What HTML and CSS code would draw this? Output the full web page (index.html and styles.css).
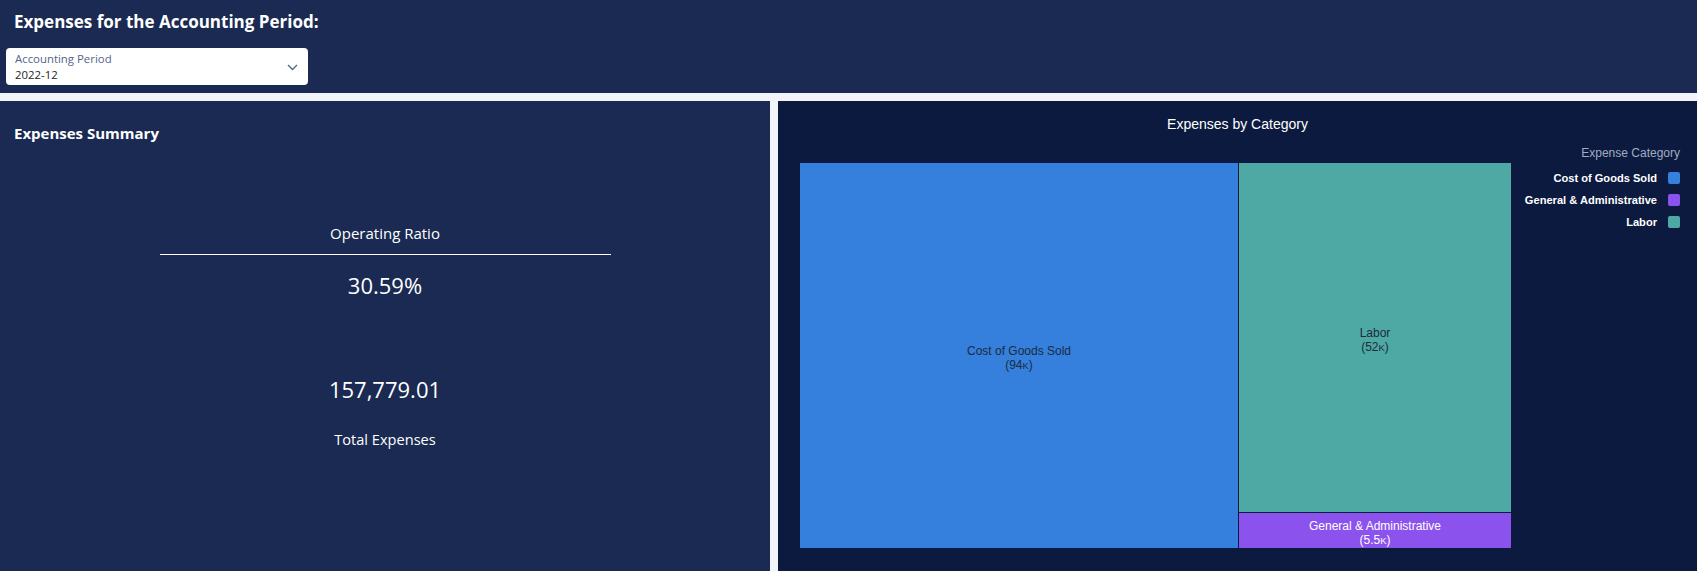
FILE: index.html
```html
<!DOCTYPE html>
<html lang="en">
<head>
<meta charset="utf-8">
<title>Expenses</title>
<link rel="stylesheet" href="styles.css">
</head>
<body>
<header class="header">
  <h1 class="title">Expenses for the Accounting Period:</h1>
  <div class="dropdown">
    <div class="dd-text">
      <div class="dd-label">Accounting Period</div>
      <div class="dd-value">2022-12</div>
    </div>
    <svg class="chev" width="11" height="7" viewBox="0 0 11 7"><path d="M1 1 L5.5 5.5 L10 1" fill="none" stroke="#56688c" stroke-width="1.4"/></svg>
  </div>
</header>
<main class="panels">
  <section class="panel left">
    <h2 class="panel-title">Expenses Summary</h2>
    <div class="kpis">
      <div class="kpi-label">Operating Ratio</div>
      <div class="rule"></div>
      <div class="kpi-value">30.59%</div>
      <div class="kpi-value total">157,779.01</div>
      <div class="kpi-label total-label">Total Expenses</div>
    </div>
  </section>
  <section class="panel right">
    <div class="chart-title">Expenses by Category</div>
    <div class="chart-body">
      <div class="treemap">
        <div class="tile cogs"><span>Cost of Goods Sold</span><span>(94<span class="sc">K</span>)</span></div>
        <div class="tm-col">
          <div class="tile labor"><span>Labor</span><span>(52<span class="sc">K</span>)</span></div>
          <div class="tile ga"><span>General &amp; Administrative</span><span>(5.5<span class="sc">K</span>)</span></div>
        </div>
      </div>
      <div class="legend">
        <div class="legend-title">Expense Category</div>
        <div class="legend-item"><span>Cost of Goods Sold</span><i class="sw sw-cogs"></i></div>
        <div class="legend-item"><span>General &amp; Administrative</span><i class="sw sw-ga"></i></div>
        <div class="legend-item"><span>Labor</span><i class="sw sw-labor"></i></div>
      </div>
    </div>
  </section>
</main>
</body>
</html>
```

FILE: styles.css
```css
* { box-sizing: border-box; }
html, body { margin: 0; padding: 0; }
body {
  width: 1697px;
  height: 571px;
  overflow: hidden;
  background: #f2f4fa;
  font-family: "Open Sans", "Liberation Sans", sans-serif;
}
.header {
  height: 93px;
  background: #1a2a52;
  padding: 10px 0 0 6px;
}
.title {
  margin: 0 0 0 8px;
  font-size: 17px;
  line-height: 24px;
  font-weight: 700;
  color: #ffffff;
}
.dropdown {
  margin-top: 14px;
  width: 302px;
  height: 37px;
  background: #ffffff;
  border-radius: 4px;
  display: flex;
  align-items: center;
  justify-content: space-between;
  padding: 0 10px 0 9px;
}
.dd-text { display: flex; flex-direction: column; gap: 1px; }
.dd-label { font-size: 11.4px; line-height: 15px; color: #52648a; }
.dd-value { font-size: 11.4px; line-height: 15px; color: #252525; }
.chev { margin-top: 1px; }

.panels {
  margin-top: 8px;
  height: 470px;
  display: flex;
  gap: 8px;
}
.panel { height: 470px; }
.left {
  width: 770px;
  background: #1a2a52;
  padding: 22px 0 0 14px;
}
.panel-title {
  margin: 0;
  font-size: 15px;
  line-height: 20px;
  font-weight: 700;
  color: #ffffff;
}
.kpis {
  margin: 80px 0 0 -14px;
  width: 770px;
  display: flex;
  flex-direction: column;
  align-items: center;
  color: #ffffff;
}
.kpi-label { font-size: 15px; line-height: 20px; }
.rule { width: 451px; height: 1px; background: #ffffff; margin-top: 11px; }
.kpi-value { font-size: 22px; line-height: 30px; margin-top: 15px; }
.kpi-value.total { margin-top: 74px; }
.total-label { margin-top: 25px; font-size: 14.6px; }

.right {
  flex: 1;
  background: #0b1a3e;
  padding-top: 14px;
  font-family: "Liberation Sans", Arial, sans-serif;
}
.chart-title {
  text-align: center;
  font-size: 14px;
  line-height: 18px;
  color: #ffffff;
}
.chart-body {
  display: flex;
  padding-left: 22px;
}
.treemap {
  margin-top: 30px;
  width: 711px;
  height: 385px;
  display: flex;
  gap: 1px;
  background: #0b1a3e;
}
.tm-col {
  width: 272px;
  display: flex;
  flex-direction: column;
  gap: 1px;
}
.tile {
  display: flex;
  flex-direction: column;
  align-items: center;
  justify-content: center;
  font-size: 12px;
  line-height: 14px;
  color: #1d2a3f;
  padding-top: 6px;
}
.sc { font-size: 9.5px; }
.cogs { width: 438px; background: #3480dc; }
.labor { flex: 1; background: #4ea9a4; }
.ga { height: 35px; background: #8b52ed; color: #ffffff; padding-top: 6px; }

.legend {
  flex: 1;
  padding: 12px 17px 0 0;
  display: flex;
  flex-direction: column;
  align-items: flex-end;
}
.legend-title {
  font-size: 12px;
  line-height: 16px;
  color: #a3abc2;
  margin-bottom: 6px;
}
.legend-item {
  height: 22px;
  display: flex;
  align-items: center;
  gap: 11px;
  font-size: 11.1px;
  color: #ffffff;
  font-weight: 700;
}
.sw { display: block; width: 12px; height: 12px; border-radius: 2px; }
.sw-cogs { background: #3480dc; }
.sw-ga { background: #8b52ed; }
.sw-labor { background: #4ea9a4; }
```
